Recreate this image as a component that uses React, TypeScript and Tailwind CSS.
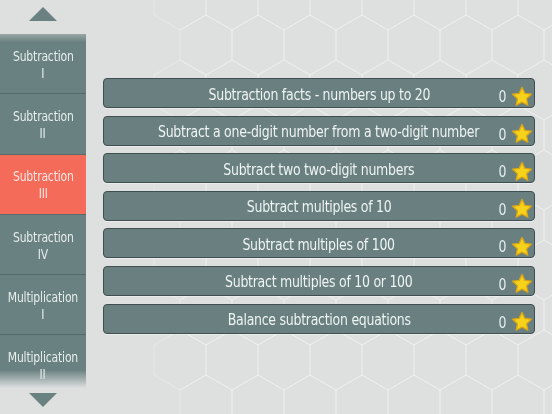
import { Fragment } from 'react';

const topics = [
  ['Subtraction', 'I'],
  ['Subtraction', 'II'],
  ['Subtraction', 'III'],
  ['Subtraction', 'IV'],
  ['Multiplication', 'I'],
  ['Multiplication', 'II'],
];

const skills = [
  'Subtraction facts - numbers up to 20',
  'Subtract a one-digit number from a two-digit number',
  'Subtract two two-digit numbers',
  'Subtract multiples of 10',
  'Subtract multiples of 100',
  'Subtract multiples of 10 or 100',
  'Balance subtraction equations',
];

function Star() {
  return (
    <svg width="22" height="21" viewBox="0 0 24 23" className="shrink-0">
      <path
        d="M12 1.5l3.1 6.6 7.2.9-5.3 5 1.4 7.1L12 17.6l-6.4 3.5 1.4-7.1-5.3-5 7.2-.9z"
        fill="#f7d21a"
        stroke="#d9a514"
        strokeWidth="1.4"
        strokeLinejoin="round"
      />
    </svg>
  );
}

function HexPattern() {
  const cells = [];
  for (let r = 0; r < 12; r++) {
    for (let c = 0; c < 8; c++) {
      const x = 180 + c * 52 + (r % 2 ? 26 : 0);
      const y = r * 45;
      cells.push(
        <polygon
          key={`${r}-${c}`}
          points={`${x},${y - 30} ${x + 26},${y - 15} ${x + 26},${y + 15} ${x},${y + 30} ${x - 26},${y + 15} ${x - 26},${y - 15}`}
        />,
      );
    }
  }
  return (
    <svg className="absolute inset-0 h-full w-full" viewBox="0 0 552 414" preserveAspectRatio="none">
      <g fill="none" stroke="#ffffff" strokeOpacity="0.3" strokeWidth="1">
        {cells}
      </g>
    </svg>
  );
}

export default function App() {
  return (
    <div
      className="relative flex h-[414px] w-[552px] overflow-hidden bg-[#dedfdf]"
      style={{ fontFamily: '"DejaVu Sans Condensed", "Liberation Sans Narrow", "Liberation Sans", sans-serif' }}
    >
      <HexPattern />

      <aside className="relative flex w-[86px] shrink-0 flex-col">
        <div className="flex h-[34px] items-center justify-center pb-[6px]">
          <div className="h-0 w-0 border-x-[14px] border-b-[14px] border-x-transparent border-b-[#6a8181]" />
        </div>
        <div className="h-[354px] overflow-hidden [mask-image:linear-gradient(to_bottom,rgba(0,0,0,0.6)_0px,black_8px,black_336px,transparent_354px)]">
          {topics.map(([name, num], i) => (
            <Fragment key={i}>
              <div
                className={`flex h-[60.3px] flex-col items-center justify-center border-b border-[#566a6a] pt-[2px] text-[14px] leading-[17px] tracking-[-0.2px] text-[#e6eded] ${
                  i === 2 ? 'bg-[#f56b5a] text-[#fde6e1]' : 'bg-[#6a8181]'
                }`}
              >
                <span className="scale-x-[0.86] whitespace-nowrap">{name}</span>
                <span className="scale-x-[0.86]">{num}</span>
              </div>
            </Fragment>
          ))}
        </div>
        <div className="flex flex-1 items-center justify-center pb-[2px]">
          <div className="h-0 w-0 border-x-[14px] border-t-[14px] border-x-transparent border-t-[#6a8181]" />
        </div>
      </aside>

      <main className="relative flex flex-1 flex-col gap-[7.6px] pl-[17px] pr-[17px] pt-[78px]">
        {skills.map((s) => (
          <div
            key={s}
            className="relative flex h-[30px] items-center justify-center rounded-[4px] border border-[#3f4e4e] bg-[#6a8080] shadow-[0_1px_0_rgba(255,255,255,0.4)]"
          >
            <span className="scale-x-[0.87] whitespace-nowrap pt-[3px] text-center text-[16px] tracking-[-0.3px] text-[#eef3f3]">
              {s}
            </span>
            <div className="absolute right-[1px] top-[6px] flex items-center gap-[4px]">
              <span className="scale-x-[0.87] pt-[2px] text-[16px] leading-[20px] text-[#e6eded]">0</span>
              <Star />
            </div>
          </div>
        ))}
      </main>
    </div>
  );
}
